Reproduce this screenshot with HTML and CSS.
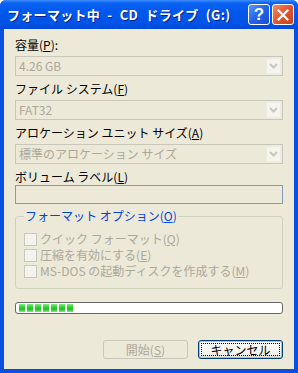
FILE: index.html
```html
<!DOCTYPE html>
<html lang="ja">
<head>
<meta charset="utf-8">
<link rel="stylesheet" href="styles.css">
</head>
<body>
<div class="window">
  <div class="titlebar">
    <span class="title">フォーマット中 - CD ドライブ (G:)</span>
    <span class="tbtn help">?</span>
    <span class="tbtn close"><svg width="12" height="12" viewBox="0 0 12 12"><path d="M1.5 1.5 L10.5 10.5 M10.5 1.5 L1.5 10.5" stroke="#fff" stroke-width="2.2" stroke-linecap="square"/></svg></span>
  </div>
  <div class="client">
    <div class="label">容量(<u>P</u>):</div>
    <div class="combo"><span class="value">4.26 GB</span><span class="arrow"><svg width="9" height="6" viewBox="0 0 9 6"><path d="M1 1 L4.5 4.5 L8 1" stroke="#C9C7BA" stroke-width="2" fill="none"/></svg></span></div>
    <div class="label">ファイル システム(<u>F</u>)</div>
    <div class="combo"><span class="value">FAT32</span><span class="arrow"><svg width="9" height="6" viewBox="0 0 9 6"><path d="M1 1 L4.5 4.5 L8 1" stroke="#C9C7BA" stroke-width="2" fill="none"/></svg></span></div>
    <div class="label">アロケーション ユニット サイズ(<u>A</u>)</div>
    <div class="combo"><span class="value">標準のアロケーション サイズ</span><span class="arrow"><svg width="9" height="6" viewBox="0 0 9 6"><path d="M1 1 L4.5 4.5 L8 1" stroke="#C9C7BA" stroke-width="2" fill="none"/></svg></span></div>
    <div class="label last">ボリューム ラベル(<u>L</u>)</div>
    <div class="textbox"></div>
    <fieldset class="group">
      <legend>フォーマット オプション(<u>O</u>)</legend>
      <div class="check"><span class="box"></span><span>クイック フォーマット(<u>Q</u>)</span></div>
      <div class="check"><span class="box"></span><span>圧縮を有効にする(<u>E</u>)</span></div>
      <div class="check"><span class="box"></span><span>MS-DOS の起動ディスクを作成する(<u>M</u>)</span></div>
    </fieldset>
    <div class="progress">
      <span class="chunk"></span><span class="chunk"></span><span class="chunk"></span><span class="chunk"></span><span class="chunk"></span><span class="chunk"></span><span class="chunk"></span>
    </div>
    <div class="buttons">
      <div class="btn disabled">開始(<u>S</u>)</div>
      <div class="btn default"><span class="focus">キャンセル</span></div>
    </div>
  </div>
</div>
</body>
</html>
```
FILE: styles.css
```css
body { margin: 0; }
.window {
  width: 298px; height: 373px; box-sizing: border-box;
  background: #0A4FE0;
  display: flex; flex-direction: column;
  font-family: "Noto Sans CJK JP", "Noto Sans", sans-serif;
  font-size: 12px;
  border-radius: 6px 6px 0 0;
  overflow: hidden;
}
.titlebar {
  height: 29px; flex: none;
  display: flex; align-items: center;
  padding: 0 4px 0 7px;
  background: linear-gradient(#3D8DFF 0, #0A62F2 3px, #0058EE 40%, #0054E6 80%, #0049D8 100%);
}
.title {
  flex: 1; color: #fff; font-weight: bold; font-size: 13px;
  text-shadow: 1px 1px 0 #0A1E8C; letter-spacing: 0.3px; word-spacing: 4px;
  white-space: nowrap;
}
.tbtn {
  width: 20px; height: 19px; border: 1px solid #fff; border-radius: 3px;
  display: flex; align-items: center; justify-content: center;
  color: #fff; font-weight: bold; font-family: "Liberation Sans", sans-serif; font-size: 17px;
  margin-left: 2px;
}
.help { background: linear-gradient(135deg, #5A97FF, #2362E8 50%, #1A4FD0); }
.close { background: linear-gradient(135deg, #F08A6C, #E2552F 50%, #C7411E); }
.client {
  flex: 1; margin: 0 4px 4px 4px;
  background: #ECE9D8;
  padding: 9px 11px 0 11px;
  display: flex; flex-direction: column;
}
.label { height: 14px; line-height: 14px; color: #000; margin-bottom: 4px; white-space: nowrap; }
.label.last { margin-bottom: 1px; }
.combo {
  height: 20px; box-sizing: border-box; border: 1px solid #C9C7BA;
  display: flex; align-items: center; justify-content: space-between;
  padding: 0 1px 0 3px; margin-bottom: 6px; color: #ACA899;
}
.combo .value { line-height: 14px; }
.arrow {
  width: 15px; height: 16px; background: #F5F4EE; border: 1px solid #EDEBE2; box-sizing: border-box;
  display: flex; align-items: center; justify-content: center;
}
.textbox { height: 19px; box-sizing: border-box; border: 1px solid #7F9DB9; }
.group {
  margin: 5px 0 0 0; padding: 8px 0 9px 8px;
  border: 1px solid #D0D0BF; border-radius: 3px;
}
.group legend { color: #0046D5; padding: 0 1px; margin-left: 0; line-height: 14px; }
.check { display: flex; align-items: center; height: 16px; color: #ACA899; white-space: nowrap; line-height: 14px; }
.check .box {
  width: 13px; height: 13px; box-sizing: border-box; border: 1px solid #CAC8BB; background: #F4F3EE; margin-right: 3px; flex: none;
}
.progress {
  margin-top: 13px; height: 12px; box-sizing: border-box;
  border: 1px solid #686868; border-radius: 3px; background: #fff;
  display: flex; align-items: center; gap: 2px; padding: 0 3px;
}
.chunk { width: 6px; height: 8px; background: linear-gradient(#86EA86, #2BD02B 40%, #28C228 70%, #8AE68A); }
.buttons { margin-top: 26px; display: flex; justify-content: flex-end; gap: 10px; }
.btn {
  width: 85px; height: 19px; box-sizing: border-box; border-radius: 3px;
  display: flex; align-items: center; justify-content: center; line-height: 14px;
}
.btn.disabled { border: 1px solid #C9C7BA; color: #ACA899; }
.btn.default {
  border: 1px solid #003C74; color: #000;
  background: linear-gradient(#FFFFFF, #F0F0EA 85%, #D6D0C5);
  box-shadow: inset 0 0 0 1px #A6C0EC;
  padding: 2px;
}
.focus { flex: 1; align-self: stretch; border: 1px dotted #000; display: flex; align-items: center; justify-content: center; }
```
